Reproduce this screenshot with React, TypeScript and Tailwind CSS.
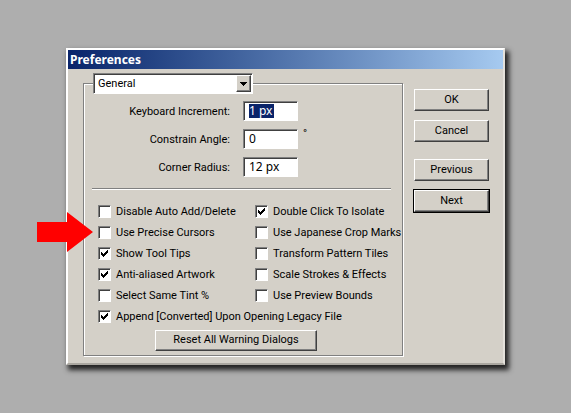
import type { ReactNode } from 'react';

const bevel =
  'flex w-full items-center justify-center border border-t-white border-l-white border-r-[#404040] border-b-[#404040] bg-[#d4d0c8] pb-px shadow-[inset_-1px_-1px_0_#808080]';
const sunken =
  'border border-t-[#808080] border-l-[#808080] border-r-white border-b-white bg-white shadow-[inset_1px_1px_0_#404040]';

function PushButton({ children, focused = false }: { children: ReactNode; focused?: boolean }) {
  return (
    <div className={focused ? 'border border-black' : 'border border-transparent'}>
      <button type="button" className={`${bevel} h-[22px]`}>
        {children}
      </button>
    </div>
  );
}

function Field({ id, label, value, unit, selected = false }: {
  id: string;
  label: string;
  value: string;
  unit?: string;
  selected?: boolean;
}) {
  return (
    <div className="flex h-5 items-center">
      <label htmlFor={id} className="w-[146px] shrink-0 pt-px text-right">{label}</label>
      <div className={`ml-[13px] flex h-5 w-[55px] items-center ${sunken}`}>
        <input
          id={id}
          defaultValue={value}
          className={
            selected
              ? 'ml-[5px] h-[14px] w-[25px] bg-[#0a246a] font-["Noto_Sans",sans-serif] text-[12px] leading-[14px] text-white outline-none'
              : 'ml-[5px] h-[14px] w-[44px] bg-transparent font-["Noto_Sans",sans-serif] text-[12px] leading-[14px] text-black outline-none'
          }
        />
      </div>
      {unit && <span className="ml-[5px] self-start leading-[10px]">{unit}</span>}
    </div>
  );
}

function Check({ label, checked = false, wide = false }: { label: string; checked?: boolean; wide?: boolean }) {
  return (
    <label className={wide ? 'col-span-2 flex h-[21px] items-center' : 'flex h-[21px] items-center'}>
      <span className="relative h-[13px] w-[13px] shrink-0">
        <input
          type="checkbox"
          defaultChecked={checked}
          className={`peer block h-[13px] w-[13px] appearance-none ${sunken}`}
        />
        <svg viewBox="0 0 13 13" className="pointer-events-none absolute inset-0 hidden h-[13px] w-[13px] peer-checked:block" shapeRendering="crispEdges">
          <path d="M3 5h1v1h1v1h1V6h1V5h1V4h1V3h1v3H9v1H8v1H7v1H6v1H5V9H4V8H3z" fill="#000" />
        </svg>
      </span>
      <span className="ml-[5px] whitespace-nowrap pt-px">{label}</span>
    </label>
  );
}

export default function App() {
  return (
    <main className="grid min-h-screen place-items-center bg-[#aeaeae] px-[66px] font-[Roboto,'Liberation_Sans',sans-serif] text-[11px] leading-[14px] text-black">
      <section
        aria-label="Preferences"
        className="relative w-full max-w-[439px] border-2 border-t-white border-l-white border-r-[#e4e1db] border-b-[#aaa7a0] bg-[#d4d0c8] shadow-[3px_4px_5px_1px_rgba(0,0,0,0.8)]"
      >
        <h1 className="flex h-[19px] items-center bg-linear-to-r from-[#0a246a] to-[#a6caf0] pl-[2px] font-['Noto_Sans',sans-serif] text-[12px] leading-[16px] font-bold text-white">
          Preferences
        </h1>
        <div className="flex items-start gap-[10px] pt-[4px] pr-[13px] pb-[7px] pl-[15px]">
          <fieldset className="min-w-0 flex-1 border border-[#808080] pb-1 shadow-[1px_1px_0_#fff,inset_1px_1px_0_#fff]">
            <legend className="ml-[9px]">
              <div className={`relative flex h-[21px] w-[160px] items-center ${sunken}`}>
                <select
                  aria-label="Section"
                  className="h-full w-full appearance-none bg-transparent pl-[4px] outline-none"
                  defaultValue="General"
                >
                  <option>General</option>
                </select>
                <span className="pointer-events-none absolute top-[1px] right-[1px] flex h-[17px] w-[15px] items-center justify-center border border-t-white border-l-white border-r-[#404040] border-b-[#404040] bg-[#d4d0c8] shadow-[inset_-1px_-1px_0_#808080]">
                  <svg viewBox="0 0 7 4" className="h-[4px] w-[7px]" shapeRendering="crispEdges">
                    <path d="M0 0h7v1H6v1H5v1H4v1H3V3H2V2H1V1H0z" />
                  </svg>
                </span>
              </div>
            </legend>
            <div className="flex flex-col gap-2 pt-[7px]">
              <Field id="increment" label="Keyboard Increment:" value="1 px" selected />
              <Field id="angle" label="Constrain Angle:" value="0" unit="°" />
              <Field id="radius" label="Corner Radius:" value="12 px" />
            </div>
            <hr className="mt-[11px] mr-[11px] ml-2 h-[2px] border-t border-b border-t-[#808080] border-b-white" />
            <div className="mt-[11px] grid grid-cols-[157px_1fr] pl-[14px]">
              <Check label="Disable Auto Add/Delete" />
              <Check label="Double Click To Isolate" checked />
              <Check label="Use Precise Cursors" />
              <Check label="Use Japanese Crop Marks" />
              <Check label="Show Tool Tips" checked />
              <Check label="Transform Pattern Tiles" />
              <Check label="Anti-aliased Artwork" checked />
              <Check label="Scale Strokes & Effects" />
              <Check label="Select Same Tint %" />
              <Check label="Use Preview Bounds" />
              <Check label="Append [Converted] Upon Opening Legacy File" checked wide />
            </div>
            <div className="mt-[3px] ml-[71px] w-[162px]">
              <button type="button" className={`${bevel} h-[21px]`}>Reset All Warning Dialogs</button>
            </div>
          </fieldset>
          <div className="flex w-[77px] shrink-0 flex-col gap-[7px] pt-[15px]">
            <PushButton>OK</PushButton>
            <PushButton>Cancel</PushButton>
            <div className="mt-2 flex flex-col gap-[7px]">
              <PushButton>Previous</PushButton>
              <PushButton focused>Next</PushButton>
            </div>
          </div>
        </div>
        <svg viewBox="0 0 56 40" className="absolute top-[162px] -left-[31px] h-10 w-14" aria-hidden="true">
          <path d="M0 10h30V0l26 20-26 20V30H0z" fill="#f00" />
        </svg>
      </section>
    </main>
  );
}
